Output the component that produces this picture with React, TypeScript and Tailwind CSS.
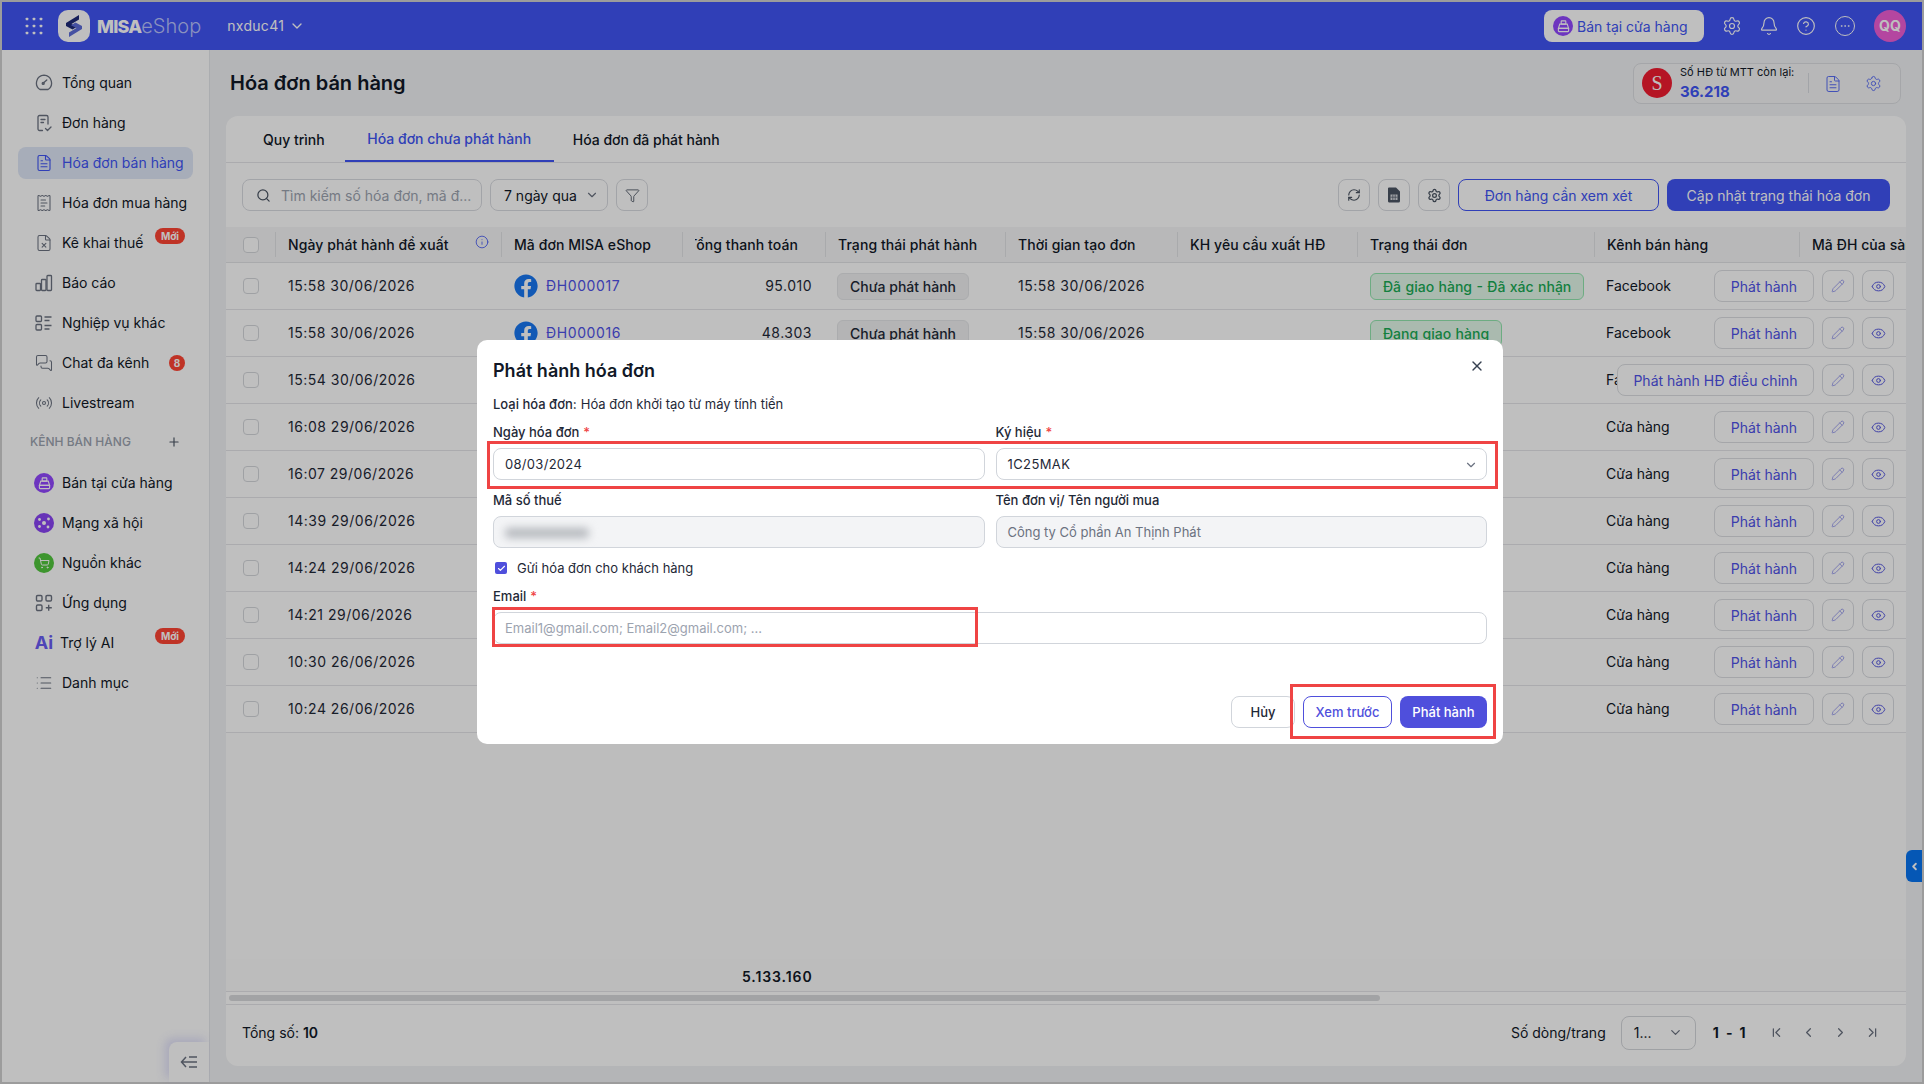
import React from "react";
import { FaFacebook } from "react-icons/fa";
import {
  Settings, Bell, CircleHelp, Ellipsis, ChevronDown, ChevronLeft, ChevronRight, ChevronFirst, ChevronLast,
  Search, Filter, RefreshCw, Pencil, Eye, Info, X, Check, Plus, FileText, ReceiptText, FileX,
  MessagesSquare, Radio, List, ShoppingCart,
} from "lucide-react";

const W = ["w-[49px]", "w-[226px]", "w-[181px]", "w-[143px]", "w-[180px]", "w-[172px]", "w-[180px]", "w-[237px]"];

function DialIcon() {
  return (
    <svg width="18" height="18" viewBox="0 0 18 18" fill="none" stroke="#6b7280" strokeWidth="1.3">
      <path d="M5 15.5A7.8 7.8 0 0 1 9 1.2a7.8 7.8 0 0 1 4 14.3z" strokeLinejoin="round" />
      <path d="M7.8 9.6 L11.8 6" strokeLinecap="round" />
      <circle cx="8.2" cy="9.4" r="1" />
    </svg>
  );
}
function OrderIcon() {
  return (
    <svg width="18" height="18" viewBox="0 0 18 18" fill="none" stroke="#6b7280" strokeWidth="1.3" strokeLinecap="round" strokeLinejoin="round">
      <path d="M7.5 16.5H4.5a1.5 1.5 0 0 1-1.5-1.5V3a1.5 1.5 0 0 1 1.5-1.5h7A1.5 1.5 0 0 1 13 3v7" />
      <path d="M6 5.5h4M6 8.5h2.5" />
      <path d="M10.5 14.5l2 2 3.5-3.5" />
    </svg>
  );
}
function BarsIcon() {
  return (
    <svg width="18" height="18" viewBox="0 0 18 18" fill="none" stroke="#6b7280" strokeWidth="1.3">
      <rect x="1" y="9.5" width="4.5" height="7" rx="0.8" />
      <rect x="6.5" y="5.5" width="4.5" height="11" rx="0.8" />
      <rect x="12" y="1.5" width="4.5" height="15" rx="0.8" />
    </svg>
  );
}
function ServiceIcon() {
  return (
    <svg width="18" height="18" viewBox="0 0 18 18" fill="none" stroke="#6b7280" strokeWidth="1.3">
      <rect x="1" y="2" width="5.5" height="5.5" rx="1" />
      <rect x="1" y="10.5" width="5.5" height="5.5" rx="1" />
      <path d="M9.5 3h7M9.5 6.5h5M9.5 11.5h7M9.5 15h5" />
    </svg>
  );
}
function AppsIcon() {
  return (
    <svg width="18" height="18" viewBox="0 0 18 18" fill="none" stroke="#6b7280" strokeWidth="1.4">
      <rect x="1.5" y="1.5" width="5.5" height="5.5" rx="1.2" />
      <rect x="11" y="1.5" width="5.5" height="5.5" rx="1.2" />
      <rect x="1.5" y="11" width="5.5" height="5.5" rx="1.2" />
      <path d="M13.7 10.8v6M10.8 13.8h6" />
    </svg>
  );
}
function DotsGrid() {
  return (
    <svg width="18" height="18" viewBox="0 0 18 18" fill="#fff">
      {[2, 9, 16].map((y) =>
        [2, 9, 16].map((x) => <rect key={`${x}-${y}`} x={x - 1.3} y={y - 1.3} width="2.6" height="2.6" rx="0.6" />)
      )}
    </svg>
  );
}
function LogoMark() {
  return (
    <div className="w-8 h-8 rounded-[10px] bg-white flex items-center justify-center">
      <svg width="22" height="24" viewBox="0 0 22 24">
        <path d="M16 1 L3 9 L3 12 L9.5 15.5 L14 12.8 L8.5 10 L16 5.5 Z" fill="#1e2a78" />
        <path d="M6 23 L19 15 L19 12 L12.5 8.5 L8 11.2 L13.5 14 L6 18.5 Z" fill="#5d6cd8" />
      </svg>
    </div>
  );
}
function StoreGlyph() {
  return (
    <svg width="13" height="13" viewBox="0 0 14 14" fill="none" stroke="#fff" strokeWidth="1.2">
      <rect x="4.5" y="1" width="5" height="3.5" rx="0.6" />
      <path d="M3 4.5h8l1.5 4.5h-11z" />
      <rect x="1.5" y="9" width="11" height="3.5" rx="0.8" />
    </svg>
  );
}
function NetworkGlyph() {
  return (
    <svg width="14" height="14" viewBox="0 0 14 14" fill="#fff">
      <circle cx="7" cy="7" r="2" />
      <circle cx="2.5" cy="3.5" r="1.4" />
      <circle cx="11.5" cy="3" r="1.4" />
      <circle cx="2.5" cy="10.5" r="1.4" />
      <circle cx="11" cy="11" r="1.4" />
    </svg>
  );
}
function CollapseGlyph() {
  return (
    <svg width="18" height="14" viewBox="0 0 18 14" fill="none" stroke="#6b7280" strokeWidth="1.5">
      <path d="M6 2 L1.5 7 L6 12 M1.5 7 H17 M9 2 H17 M9 12 H17" />
    </svg>
  );
}
function CalcFile() {
  return (
    <svg width="14" height="16" viewBox="0 0 14 16">
      <path d="M2 0.5h7l4 4V14a1.5 1.5 0 0 1-1.5 1.5h-9.5A1.5 1.5 0 0 1 1 14V1.5A1 1 0 0 1 2 0.5z" fill="#4b5563" />
      <rect x="3.5" y="7.5" width="7" height="5.5" fill="#d9dbe0" />
      <path d="M3.5 10.2h7M5.8 7.5v5.5M8.2 7.5v5.5" stroke="#4b5563" strokeWidth="0.7" />
    </svg>
  );
}
function Round({ bg, children, size = "w-5 h-5" }: { bg: string; children: React.ReactNode; size?: string }) {
  return <span className={`${size} ${bg} rounded-full flex items-center justify-center shrink-0`}>{children}</span>;
}

const menuIcon = { size: 18, color: "#6b7280", strokeWidth: 1.4 };

function Badge({ children, round }: { children: React.ReactNode; round?: boolean }) {
  return (
    <span
      className={`absolute right-[8px] h-4 bg-[#ff4433] text-white text-[10px] font-bold flex items-center justify-center rounded-full ${
        round ? "w-4 top-[8px]" : "w-[30px] top-[1px]"
      }`}
    >
      {children}
    </span>
  );
}

function Item({
  icon, label, active, badge, round, tight,
}: { icon: React.ReactNode; label: string; active?: boolean; badge?: string; round?: boolean; tight?: boolean }) {
  return (
    <div
      className={`relative h-8 flex items-center pl-4 rounded-lg text-sm ${tight ? "gap-[6px]" : "gap-2"} ${
        active ? "bg-[#dfe7f7] text-[#4054f4]" : "text-[#111827]"
      }`}
    >
      <span className="w-5 h-5 flex items-center justify-center shrink-0">{icon}</span>
      <span className="whitespace-nowrap">{label}</span>
      {badge && <Badge round={round}>{badge}</Badge>}
    </div>
  );
}

function Sidebar() {
  return (
    <aside className="relative w-[208px] shrink-0 bg-white border-r border-[#e5e7eb] pt-[17px] pl-4 pr-[16px] flex flex-col gap-2">
      <Item icon={<DialIcon />} label="Tổng quan" />
      <Item icon={<OrderIcon />} label="Đơn hàng" />
      <Item icon={<FileText size={18} color="#4054f4" strokeWidth={1.5} />} label="Hóa đơn bán hàng" active />
      <Item icon={<ReceiptText {...menuIcon} />} label="Hóa đơn mua hàng" />
      <Item icon={<FileX {...menuIcon} />} label="Kê khai thuế" badge="Mới" />
      <Item icon={<BarsIcon />} label="Báo cáo" />
      <Item icon={<ServiceIcon />} label="Nghiệp vụ khác" />
      <Item icon={<MessagesSquare {...menuIcon} />} label="Chat đa kênh" badge="8" round />
      <Item icon={<Radio {...menuIcon} />} label="Livestream" />
      <div className="mt-1 mb-2 h-5 pt-px flex items-center justify-between pl-3 pr-[12px] text-xs font-medium text-[#9ca3af]">
        <span>KÊNH BÁN HÀNG</span>
        <Plus size={14} color="#4b5563" />
      </div>
      <Item icon={<Round bg="bg-[#9247ff]"><StoreGlyph /></Round>} label="Bán tại cửa hàng" />
      <Item icon={<Round bg="bg-[#8a44f5]"><NetworkGlyph /></Round>} label="Mạng xã hội" />
      <Item icon={<Round bg="bg-[#52c73e]"><ShoppingCart size={12} color="#fff" /></Round>} label="Nguồn khác" />
      <Item icon={<AppsIcon />} label="Ứng dụng" />
      <Item icon={<span className="text-[18px] leading-none font-bold text-[#6a5cf5]">Ai</span>} label="Trợ lý AI" badge="Mới" tight />
      <Item icon={<List {...menuIcon} />} label="Danh mục" />
      <div className="absolute right-0 bottom-0 w-10 h-10 bg-white rounded-tl-lg shadow-[-4px_-4px_10px_rgba(90,90,220,0.18)] flex items-center justify-center">
        <CollapseGlyph />
      </div>
    </aside>
  );
}

function Header() {
  return (
    <header className="h-12 shrink-0 bg-[#4054f4] flex items-center text-white">
      <span className="ml-[23px]"><DotsGrid /></span>
      <span className="ml-[15px]"><LogoMark /></span>
      <span className="ml-[7px] text-[18px] font-extrabold tracking-[-0.8px]">MISA</span>
      <span className="text-[20px] font-light text-[#b9c2ff]">eShop</span>
      <span className="ml-[26px] text-sm tracking-[0.3px]">nxduc41</span>
      <ChevronDown size={16} className="ml-[5px]" />
      <div className="ml-auto w-[160px] h-8 rounded-lg bg-white flex items-center pl-[9px] gap-[4px] text-sm text-[#4054f4]">
        <Round bg="bg-[#9247ff]"><StoreGlyph /></Round>
        <span className="whitespace-nowrap pt-px">Bán tại cửa hàng</span>
      </div>
      <Settings size={20} strokeWidth={1.4} className="ml-[18px]" />
      <Bell size={20} strokeWidth={1.4} className="ml-[17px]" />
      <CircleHelp size={20} strokeWidth={1.4} className="ml-[17px]" />
      <span className="ml-[19px] w-5 h-5 rounded-full border border-white flex items-center justify-center">
        <Ellipsis size={12} strokeWidth={1.5} />
      </span>
      <span className="ml-[19px] mr-[16px] w-8 h-8 rounded-full bg-[#f05ed6] flex items-center justify-center font-bold text-sm">QQ</span>
    </header>
  );
}

function IconBtn({ children }: { children: React.ReactNode }) {
  return (
    <span className="w-8 h-8 rounded-lg border border-[#d9dbe0] flex items-center justify-center shrink-0">{children}</span>
  );
}

function Toolbar() {
  return (
    <div className="h-[64px] shrink-0 pl-4 pr-4 flex items-center">
      <div className="w-[240px] h-8 rounded-lg border border-[#d9dbe0] flex items-center pl-[13px] gap-[10px] text-sm text-[#9ca3af]">
        <Search size={15} color="#4b5563" className="shrink-0" />
        <span className="whitespace-nowrap pt-px">Tìm kiếm số hóa đơn, mã đ...</span>
      </div>
      <div className="ml-2 w-[118px] h-8 rounded-lg border border-[#d9dbe0] flex items-center justify-between pl-[13px] pr-[8px] text-sm text-[#111827]">
        <span className="whitespace-nowrap pt-px">7 ngày qua</span>
        <ChevronDown size={14} color="#6b7280" />
      </div>
      <span className="ml-2"><IconBtn><Filter size={15} color="#4b5563" strokeWidth={1.4} /></IconBtn></span>
      <div className="ml-auto flex items-center gap-2">
        <IconBtn><RefreshCw size={14} color="#4b5563" /></IconBtn>
        <IconBtn><CalcFile /></IconBtn>
        <IconBtn><Settings size={15} color="#4b5563" /></IconBtn>
        <span className="w-[201px] h-8 pt-px rounded-lg border border-[#4054f4] text-[#4054f4] text-sm flex items-center justify-center whitespace-nowrap">Đơn hàng cần xem xét</span>
        <span className="w-[223px] h-8 pt-px rounded-lg bg-[#4054f4] text-white text-sm flex items-center justify-center whitespace-nowrap">Cập nhật trạng thái hóa đơn</span>
      </div>
    </div>
  );
}

const th = "h-[25px] border-l border-[#e2e3e6] pl-3 flex items-center text-sm font-medium tracking-[0.08px] whitespace-nowrap overflow-hidden shrink-0";

function Cb() {
  return <span className="w-4 h-4 rounded-[4px] border border-[#d5d7db] bg-white block" />;
}

function TableHead() {
  return (
    <div className="h-[36px] shrink-0 bg-[#f6f6f7] border-b border-[#e2e3e6] flex items-center text-[#111827]">
      <div className={`${W[0]} pl-[17px] shrink-0`}><Cb /></div>
      <div className={`${W[1]} ${th}`}>
        <span>Ngày phát hành đề xuất</span>
        <Info size={14} color="#4054f4" strokeWidth={1.4} className="ml-auto mr-[12px] -mt-[6px]" />
      </div>
      <div className={`${W[2]} ${th}`}>Mã đơn MISA eShop</div>
      <div className={`${W[3]} ${th}`}>
        <div className="w-[103px] overflow-hidden flex justify-end">
          <span className="shrink-0">Tổng thanh toán</span>
        </div>
      </div>
      <div className={`${W[4]} ${th}`}>Trạng thái phát hành</div>
      <div className={`${W[5]} ${th}`}>Thời gian tạo đơn</div>
      <div className={`${W[6]} ${th}`}>KH yêu cầu xuất HĐ</div>
      <div className={`${W[7]} ${th}`}>Trạng thái đơn</div>
      <div className={`w-[205px] ${th}`}>Kênh bán hàng</div>
      <div className={`flex-1 min-w-0 ${th}`}>Mã ĐH của sàn</div>
    </div>
  );
}

type RowData = { t: string; id?: string; amt?: string; st?: string; ch: string; long?: boolean };
const rows: RowData[] = [
  { t: "15:58 30/06/2026", id: "ĐH000017", amt: "95.010", st: "Đã giao hàng - Đã xác nhận", ch: "Facebook" },
  { t: "15:58 30/06/2026", id: "ĐH000016", amt: "48.303", st: "Đang giao hàng", ch: "Facebook" },
  { t: "15:54 30/06/2026", ch: "Facebook", long: true },
  { t: "16:08 29/06/2026", ch: "Cửa hàng" },
  { t: "16:07 29/06/2026", ch: "Cửa hàng" },
  { t: "14:39 29/06/2026", ch: "Cửa hàng" },
  { t: "14:24 29/06/2026", ch: "Cửa hàng" },
  { t: "14:21 29/06/2026", ch: "Cửa hàng" },
  { t: "10:30 26/06/2026", ch: "Cửa hàng" },
  { t: "10:24 26/06/2026", ch: "Cửa hàng" },
];

function Row({ r }: { r: RowData }) {
  return (
    <div className="h-[47px] shrink-0 border-b border-[#e4e5e8] flex items-center text-sm text-[#1f2937]">
      <div className={`${W[0]} pl-[17px] shrink-0`}><Cb /></div>
      <div className={`${W[1]} pl-[13px] shrink-0 tracking-[0.5px] whitespace-nowrap`}>{r.t}</div>
      <div className={`${W[2]} pl-[13px] shrink-0 flex items-center gap-2`}>
        {r.id && (
          <>
            <FaFacebook size={24} color="#1877f2" />
            <span className="text-[#4f52e8] tracking-[0.6px]">{r.id}</span>
          </>
        )}
      </div>
      <div className={`${W[3]} pr-[13px] shrink-0 text-right tracking-[0.5px]`}>{r.amt}</div>
      <div className={`${W[4]} pl-3 shrink-0`}>
        {r.id && (
          <span className="w-[132px] h-[27px] pt-px rounded-md bg-[#f0f1f2] border border-[#e5e6e8] flex items-center justify-center font-medium text-sm whitespace-nowrap">
            Chưa phát hành
          </span>
        )}
      </div>
      <div className={`${W[5]} pl-[13px] shrink-0 tracking-[0.5px] whitespace-nowrap`}>{r.id && r.t}</div>
      <div className={`${W[6]} shrink-0`} />
      <div className={`${W[7]} pl-[13px] shrink-0`}>
        {r.st && (
          <span className="inline-flex h-[27px] pt-px px-[12px] rounded-md bg-[#e3f9ea] border border-[#92e6ae] items-center text-[#1aab55] font-medium text-sm whitespace-nowrap [word-spacing:0.7px]">
            {r.st}
          </span>
        )}
      </div>
      <div className="flex-1 min-w-0 pl-3 overflow-hidden whitespace-nowrap text-[#111827]">{r.ch}</div>
      <div className="shrink-0 pr-3 flex items-center">
        <span className={`${r.long ? "w-[197px]" : "w-[100px]"} h-8 pt-px rounded-lg border border-[#dcdee2] text-[#4f52e8] flex items-center justify-center whitespace-nowrap`}>
          {r.long ? "Phát hành HĐ điều chỉnh" : "Phát hành"}
        </span>
        <span className="ml-2"><IconBtn><Pencil size={14} color="#8f92ea" strokeWidth={1.4} /></IconBtn></span>
        <span className="ml-2"><IconBtn><Eye size={15} color="#5557e0" strokeWidth={1.6} /></IconBtn></span>
      </div>
    </div>
  );
}

function Content() {
  return (
    <main className="relative flex-1 min-w-0 bg-[#f1f2f4] flex flex-col px-4 pb-4">
      <div className="h-[66px] shrink-0 flex items-center justify-between pl-1 pr-[5px]">
        <h1 className="text-[20px] font-semibold text-[#111827]">Hóa đơn bán hàng</h1>
        <div className="w-[268px] h-[41px] rounded-lg border border-[#dcdee2] bg-[#f4f5f6] flex items-center pl-2">
          <span className="w-[30px] h-[30px] rounded-full bg-[#f21c31] text-white text-[20px] flex items-center justify-center [font-family:'Liberation_Serif',serif]">S</span>
          <div className="ml-2 w-[128px] flex flex-col">
            <span className="text-[11px] leading-[14px] text-[#111827] whitespace-nowrap">Số HĐ từ MTT còn lại:</span>
            <span className="mt-[3px] -mb-px text-[15px] leading-[20px] font-bold text-[#4054f4]">36.218</span>
          </div>
          <span className="h-5 border-l border-[#d9dbe0]" />
          <FileText size={18} color="#5468f5" strokeWidth={1.3} className="ml-[15px] mt-[2px]" />
          <Settings size={17} color="#5468f5" strokeWidth={1.3} className="ml-[23px]" />
        </div>
      </div>
      <section className="flex-1 min-h-0 bg-white rounded-xl flex flex-col overflow-hidden">
        <div className="h-[47px] shrink-0 border-b border-[#e4e5e8] flex pl-[17px] text-sm font-medium text-[#111827]">
          <span className="px-5 pt-[2px] flex items-center">Quy trình</span>
          <span className="w-[209px] pt-[2px] flex items-center justify-center text-[#4054f4] border-b-2 border-[#4054f4]">Hóa đơn chưa phát hành</span>
          <span className="pl-[19px] pt-[2px] flex items-center">Hóa đơn đã phát hành</span>
        </div>
        <Toolbar />
        <TableHead />
        {rows.map((r) => <Row key={r.t} r={r} />)}
        <div className="flex-1 bg-[#fdfdfd]" />
        <div className="h-[32px] pt-[3px] shrink-0 bg-[#fbfbfb] flex items-center">
          <span className="ml-[516px] text-sm font-semibold text-[#111827] tracking-[0.9px]">5.133.160</span>
        </div>
        <div className="h-[14px] shrink-0 border-y border-[#e4e5e8] flex items-center px-[3px]">
          <span className="w-[1151px] h-[6px] rounded-full bg-[#d9dadc]" />
        </div>
        <div className="h-[61px] shrink-0 pb-[6px] flex items-center pl-4 pr-[26px] text-sm text-[#111827]">
          <span>Tổng số: <b className="font-semibold">10</b></span>
          <span className="ml-auto">Số dòng/trang</span>
          <span className="ml-[15px] w-[75px] h-[34px] rounded-lg border border-[#d5d7db] flex items-center justify-between pl-[12px] pr-[12px]">
            <span>1...</span>
            <ChevronDown size={15} color="#6b7280" />
          </span>
          <span className="ml-[17px] font-bold tracking-[0.4px] [word-spacing:3px]">1 - 1</span>
          <ChevronFirst size={15} color="#6b7280" className="ml-[23px]" />
          <ChevronLeft size={15} color="#6b7280" className="ml-[17px]" />
          <ChevronRight size={15} color="#6b7280" className="ml-[17px]" />
          <ChevronLast size={15} color="#6b7280" className="ml-[17px]" />
        </div>
      </section>
      <div className="absolute right-0 top-[800px] w-4 h-8 bg-[#0774f2] rounded-l-md flex items-center justify-center">
        <ChevronLeft size={11} color="#fff" strokeWidth={4} />
      </div>
    </main>
  );
}

function Label({ children, req }: { children: React.ReactNode; req?: boolean }) {
  return (
    <div className="h-5 pt-[2px] flex items-center text-[13px] font-medium text-[#1f2937]">
      {children}
      {req && <span className="ml-1 text-[#ef4444]">*</span>}
    </div>
  );
}

function Modal() {
  const field = "h-8 pt-px rounded-lg border border-[#d1d5db] flex items-center pl-[11px] pr-[8px] text-[13px]";
  const redBox = "absolute border-[3px] border-[#ef4444] pointer-events-none";
  return (
    <div className="absolute left-[477px] top-[340px] w-[1026px] h-[404px] bg-white rounded-[10px] px-4 pt-[18px] pb-4 flex flex-col text-[#1f2937]">
      <div className="h-6 flex items-center justify-between">
        <h2 className="text-[18px] font-semibold text-[#111827]">Phát hành hóa đơn</h2>
        <X size={16} color="#374151" className="-mt-2 mr-[2px]" />
      </div>
      <div className="mt-3 h-5 pt-[2px] flex items-center text-[13px]">
        <span className="font-medium">Loại hóa đơn:</span>
        <span className="ml-1 whitespace-nowrap">Hóa đơn khởi tạo từ máy tính tiền</span>
      </div>
      <div className="mt-2 grid grid-cols-2 gap-x-[11px]">
        <div>
          <Label req>Ngày hóa đơn</Label>
          <div className={`${field} mt-[6px] tracking-[0.3px]`}>08/03/2024</div>
        </div>
        <div>
          <Label req>Ký hiệu</Label>
          <div className={`${field} mt-[6px] justify-between tracking-[0.4px]`}>
            <span>1C25MAK</span>
            <ChevronDown size={14} color="#6b7280" />
          </div>
        </div>
        <div className="mt-[10px]">
          <Label>Mã số thuế</Label>
          <div className={`${field} mt-[6px] bg-[#f3f4f6]`}>
            <span className="w-[84px] h-[10px] rounded bg-[#b4b7bc] blur-[4px]" />
          </div>
        </div>
        <div className="mt-[10px]">
          <Label>Tên đơn vị/ Tên người mua</Label>
          <div className={`${field} mt-[6px] bg-[#f3f4f6] text-[#6b7280]`}>Công ty Cổ phần An Thịnh Phát</div>
        </div>
      </div>
      <div className="mt-[10px] h-5 flex items-center text-[13px]">
        <span className="ml-[2px] w-3 h-3 rounded-[2px] bg-[#4f4fdc] flex items-center justify-center">
          <Check size={9} color="#fff" strokeWidth={3} />
        </span>
        <span className="ml-[10px] pt-[2px]">Gửi hóa đơn cho khách hàng</span>
      </div>
      <div className="mt-2"><Label req>Email</Label></div>
      <div className={`${field} mt-[6px] text-[#9ca3af]`}>Email1@gmail.com; Email2@gmail.com; ...</div>
      <div className="mt-auto flex justify-end items-center text-[13px]">
        <span className="w-[64px] h-8 pt-px rounded-lg border border-[#d1d5db] flex items-center justify-center font-medium">Hủy</span>
        <span className="ml-2 w-[89px] h-8 pt-px rounded-lg border border-[#4f4fdc] text-[#4f4fdc] flex items-center justify-center font-medium">Xem trước</span>
        <span className="ml-2 w-[87px] h-8 pt-px rounded-lg bg-[#4f4fdc] text-white flex items-center justify-center font-medium">Phát hành</span>
      </div>
      <div className={`${redBox} left-[10px] top-[101px] w-[1011px] h-[48px]`} />
      <div className={`${redBox} left-[15px] top-[267px] w-[486px] h-[40px]`} />
      <div className={`${redBox} left-[813px] top-[344px] w-[206px] h-[55px]`} />
    </div>
  );
}

export default function App() {
  return (
    <div className="relative w-[1924px] h-[1084px] overflow-hidden [font-family:Inter,'Noto_Sans',sans-serif]">
      <div className="h-full border-2 border-[#d0d0d0] flex flex-col bg-white">
        <Header />
        <div className="flex-1 min-h-0 flex">
          <Sidebar />
          <Content />
        </div>
      </div>
      <div className="absolute inset-0 bg-black/25">
        <Modal />
      </div>
    </div>
  );
}
